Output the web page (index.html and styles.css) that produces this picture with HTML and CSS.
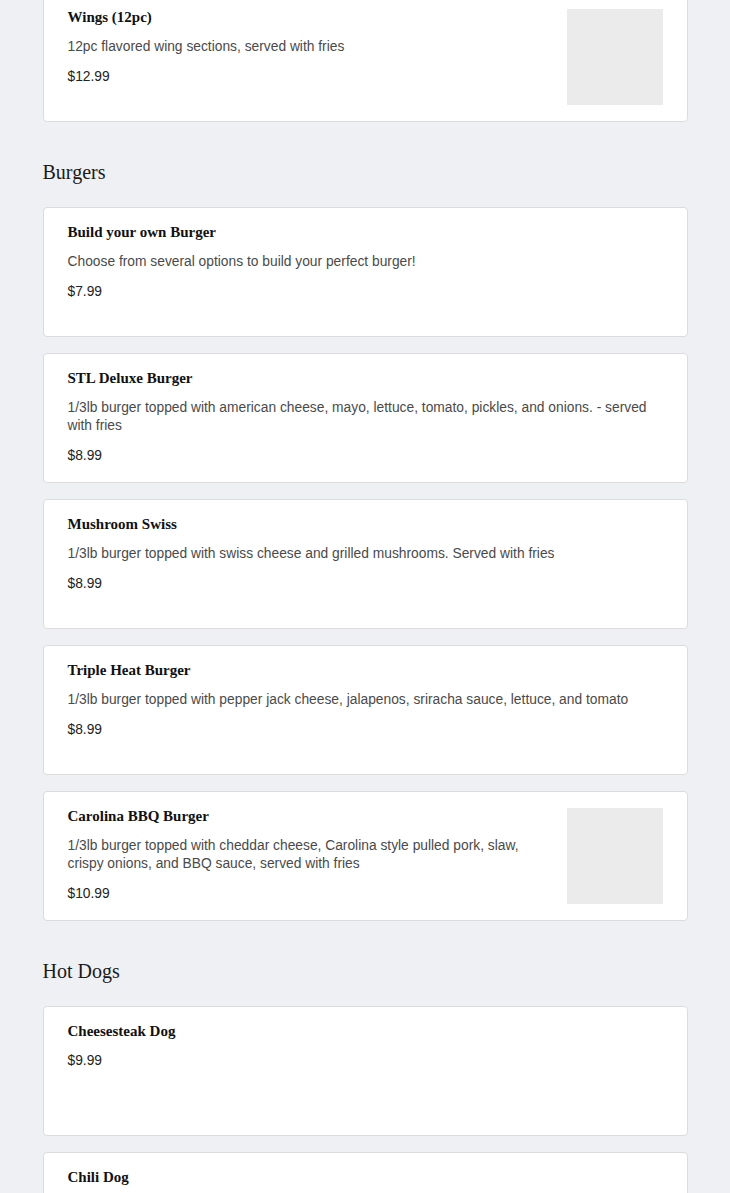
FILE: index.html
```html
<!DOCTYPE html>
<html lang="en">
<head>
<meta charset="utf-8">
<title>Menu</title>
<link rel="stylesheet" href="styles.css">
</head>
<body>
<main class="menu">
  <section class="section section--first">
    <div class="items">
      <article class="item">
        <div class="item__text">
          <h3 class="item__name">Wings (12pc)</h3>
          <p class="item__desc">12pc flavored wing sections, served with fries</p>
          <p class="item__price">$12.99</p>
        </div>
        <div class="item__img"></div>
      </article>
    </div>
  </section>

  <section class="section">
    <h2 class="section__title">Burgers</h2>
    <div class="items">
      <article class="item">
        <div class="item__text">
          <h3 class="item__name">Build your own Burger</h3>
          <p class="item__desc">Choose from several options to build your perfect burger!</p>
          <p class="item__price">$7.99</p>
        </div>
      </article>
      <article class="item">
        <div class="item__text">
          <h3 class="item__name">STL Deluxe Burger</h3>
          <p class="item__desc">1/3lb burger topped with american cheese, mayo, lettuce, tomato, pickles, and onions. - served with fries</p>
          <p class="item__price">$8.99</p>
        </div>
      </article>
      <article class="item">
        <div class="item__text">
          <h3 class="item__name">Mushroom Swiss</h3>
          <p class="item__desc">1/3lb burger topped with swiss cheese and grilled mushrooms. Served with fries</p>
          <p class="item__price">$8.99</p>
        </div>
      </article>
      <article class="item">
        <div class="item__text">
          <h3 class="item__name">Triple Heat Burger</h3>
          <p class="item__desc">1/3lb burger topped with pepper jack cheese, jalapenos, sriracha sauce, lettuce, and tomato</p>
          <p class="item__price">$8.99</p>
        </div>
      </article>
      <article class="item">
        <div class="item__text">
          <h3 class="item__name">Carolina BBQ Burger</h3>
          <p class="item__desc">1/3lb burger topped with cheddar cheese, Carolina style pulled pork, slaw, crispy onions, and BBQ sauce, served with fries</p>
          <p class="item__price">$10.99</p>
        </div>
        <div class="item__img"></div>
      </article>
    </div>
  </section>

  <section class="section">
    <h2 class="section__title">Hot Dogs</h2>
    <div class="items">
      <article class="item">
        <div class="item__text">
          <h3 class="item__name">Cheesesteak Dog</h3>
          <p class="item__price">$9.99</p>
        </div>
      </article>
      <article class="item">
        <div class="item__text">
          <h3 class="item__name">Chili Dog</h3>
        </div>
      </article>
    </div>
  </section>
</main>
</body>
</html>
```
FILE: styles.css
```css
* { box-sizing: border-box; }

html, body {
  margin: 0;
  padding: 0;
  background: #eff0f3;
}

body {
  font-family: "Liberation Sans", Arial, sans-serif;
  color: #222;
}

.menu {
  max-width: 645px;
  margin: -8px auto 0;
}

.section__title {
  font-family: "Liberation Serif", "DejaVu Serif", serif;
  font-weight: normal;
  font-size: 20px;
  line-height: 28px;
  color: #1a1a1a;
  margin: 36px 0 21px;
}

.items {
  display: flex;
  flex-direction: column;
  gap: 16px;
}

.item {
  display: flex;
  gap: 24px;
  min-height: 130px;
  background: #fff;
  border: 1px solid #dcdcdf;
  border-radius: 4px;
  padding: 16px 24px;
}

.item__text {
  flex: 1;
  min-width: 0;
}

.item__name {
  font-family: "Liberation Serif", "DejaVu Serif", serif;
  font-weight: bold;
  font-size: 15px;
  line-height: 16px;
  color: #111;
  margin: 0 0 13px;
}

.item__desc {
  font-size: 13.8px;
  line-height: 18px;
  color: #4a4a4a;
  margin: 0 0 12px;
}

.item__price {
  font-size: 13.8px;
  line-height: 18px;
  color: #222;
  margin: 0;
}

.item__img {
  flex: none;
  width: 96px;
  height: 96px;
  background: #ebebeb;
}
```
